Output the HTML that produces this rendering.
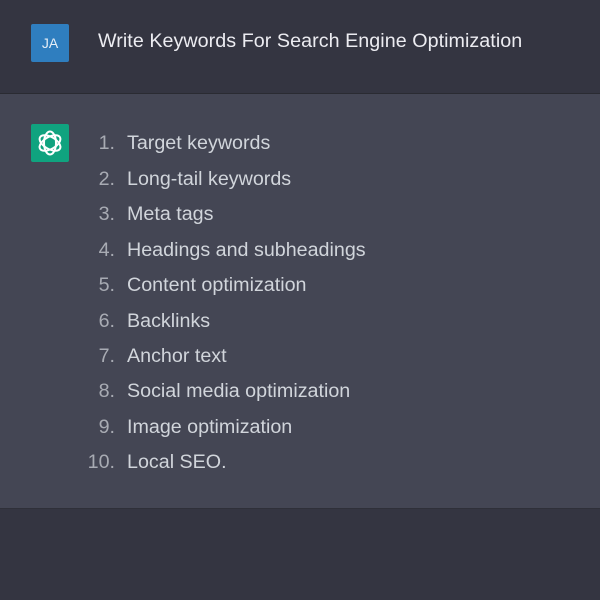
<!DOCTYPE html>
<html><head><style>
body{margin:0;width:600px;height:600px;background:#343541;font-family:"Liberation Sans",sans-serif;overflow:hidden;position:relative}
.top{position:absolute;left:0;top:0;width:600px;height:93px;background:#343541;border-bottom:1px solid #2a2b32}
.mid{position:absolute;left:0;top:94px;width:600px;height:414px;background:#444654;border-bottom:1px solid #2f3039}
.av{position:absolute;left:31px;top:24px;width:38px;height:38px;background:#2f7ebf;border-radius:2px;color:#e6eef6;font-size:14px;text-align:center;line-height:38px}
.q{position:absolute;left:98px;top:30px;color:#ececf1;font-size:19.7px;letter-spacing:0.05px}
.logo{position:absolute;left:31px;top:124px;width:38px;height:38px;background:#10a37f;border-radius:2px}
.li{position:absolute;left:0;color:#d1d5db;font-size:19.7px;height:24px;line-height:24px}
.li .n{position:absolute;left:75px;width:40px;text-align:right;color:#a8abb3}
.li .t{position:absolute;left:127px;white-space:nowrap}
</style></head><body>
<div class="top"></div><div class="mid"></div>
<div class="av">JA</div>
<div class="q">Write Keywords For Search Engine Optimization</div>
<div class="logo"><svg width="38" height="38" viewBox="0 0 38 38"><g fill="none" stroke="#fff" stroke-width="2">
<ellipse cx="19" cy="19" rx="6" ry="11.5"/><ellipse cx="19" cy="19" rx="6" ry="11.5" transform="rotate(60 19 19)"/><ellipse cx="19" cy="19" rx="6" ry="11.5" transform="rotate(120 19 19)"/></g></svg></div>
<div class="li" style="top:131px"><span class="n">1.</span><span class="t">Target keywords</span></div>
<div class="li" style="top:167px"><span class="n">2.</span><span class="t">Long-tail keywords</span></div>
<div class="li" style="top:202px"><span class="n">3.</span><span class="t">Meta tags</span></div>
<div class="li" style="top:238px"><span class="n">4.</span><span class="t">Headings and subheadings</span></div>
<div class="li" style="top:273px"><span class="n">5.</span><span class="t">Content optimization</span></div>
<div class="li" style="top:309px"><span class="n">6.</span><span class="t">Backlinks</span></div>
<div class="li" style="top:344px"><span class="n">7.</span><span class="t">Anchor text</span></div>
<div class="li" style="top:379px"><span class="n">8.</span><span class="t">Social media optimization</span></div>
<div class="li" style="top:415px"><span class="n">9.</span><span class="t">Image optimization</span></div>
<div class="li" style="top:450px"><span class="n">10.</span><span class="t">Local SEO.</span></div>
</body></html>
